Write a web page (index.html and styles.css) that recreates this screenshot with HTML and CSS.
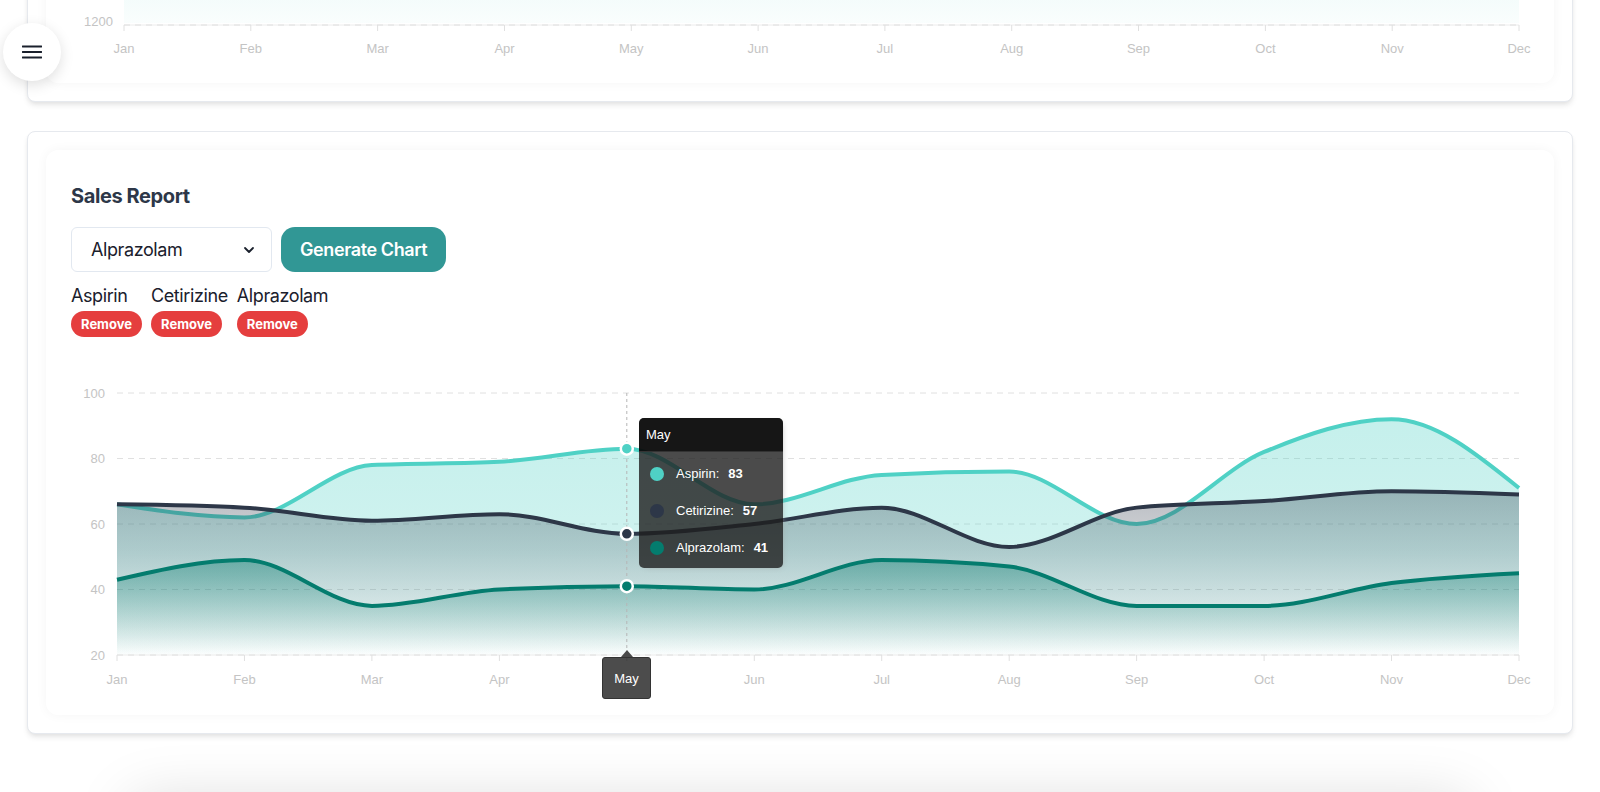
FILE: index.html
```html
<!DOCTYPE html>
<html lang="en">
<head>
<meta charset="utf-8">
<title>Sales Report</title>
<link rel="stylesheet" href="styles.css">
</head>
<body>
<button class="menu-btn" aria-label="Open menu">
  <svg width="20" height="14" viewBox="0 0 20 14"><path d="M0.5 1.5h19M0.5 7h19M0.5 12.5h19" stroke="#1a202c" stroke-width="1.9" stroke-linecap="round"/></svg>
</button>

<main class="page">
  <section class="card card-top">
    <div class="panel">
      <svg class="chart-top" width="1508" height="104" viewBox="0 0 1508 104">
        <defs>
          <linearGradient id="gTop" x1="0" y1="0" x2="0" y2="1">
            <stop offset="0" stop-color="#4fd1c5" stop-opacity="0.09"/>
            <stop offset="1" stop-color="#4fd1c5" stop-opacity="0.03"/>
          </linearGradient>
        </defs>
        <rect x="78" y="0" width="1395" height="44" fill="url(#gTop)"/>
        <line class="axis" x1="78" y1="46" x2="1473" y2="46"/>
        <line class="grid" x1="78" y1="46" x2="1473" y2="46"/>
        <g class="ticks">
          <line x1="78" y1="46" x2="78" y2="52"/><line x1="204.8" y1="46" x2="204.8" y2="52"/><line x1="331.6" y1="46" x2="331.6" y2="52"/><line x1="458.5" y1="46" x2="458.5" y2="52"/><line x1="585.3" y1="46" x2="585.3" y2="52"/><line x1="712.1" y1="46" x2="712.1" y2="52"/><line x1="838.9" y1="46" x2="838.9" y2="52"/><line x1="965.7" y1="46" x2="965.7" y2="52"/><line x1="1092.5" y1="46" x2="1092.5" y2="52"/><line x1="1219.4" y1="46" x2="1219.4" y2="52"/><line x1="1346.2" y1="46" x2="1346.2" y2="52"/><line x1="1473" y1="46" x2="1473" y2="52"/>
        </g>
        <text class="lbl" x="67" y="42" text-anchor="end" dy="0.35em">1200</text>
        <g class="lbl" text-anchor="middle">
          <text x="78" y="69" dy="0.35em">Jan</text><text x="204.8" y="69" dy="0.35em">Feb</text><text x="331.6" y="69" dy="0.35em">Mar</text><text x="458.5" y="69" dy="0.35em">Apr</text><text x="585.3" y="69" dy="0.35em">May</text><text x="712.1" y="69" dy="0.35em">Jun</text><text x="838.9" y="69" dy="0.35em">Jul</text><text x="965.7" y="69" dy="0.35em">Aug</text><text x="1092.5" y="69" dy="0.35em">Sep</text><text x="1219.4" y="69" dy="0.35em">Oct</text><text x="1346.2" y="69" dy="0.35em">Nov</text><text x="1473" y="69" dy="0.35em">Dec</text>
        </g>
      </svg>
    </div>
  </section>

  <section class="card">
    <div class="panel panel-main">
      <h2 class="title">Sales Report</h2>
      <div class="controls">
        <div class="select">
          <span>Alprazolam</span>
          <svg width="10" height="6" viewBox="0 0 10 6"><path d="M1 1l4 4 4-4" stroke="#1a202c" stroke-width="1.8" fill="none" stroke-linecap="round" stroke-linejoin="round"/></svg>
        </div>
        <button class="btn-primary">Generate Chart</button>
      </div>
      <ul class="tags">
        <li class="tag"><span class="tag-name">Aspirin</span><button class="btn-remove">Remove</button></li>
        <li class="tag"><span class="tag-name">Cetirizine</span><button class="btn-remove">Remove</button></li>
        <li class="tag"><span class="tag-name">Alprazolam</span><button class="btn-remove">Remove</button></li>
      </ul>

      <div class="chart-wrap">
        <svg class="chart" width="1458" height="355" viewBox="0 0 1458 355">
          <defs>
            <linearGradient id="gAsp" x1="0" y1="0" x2="0" y2="1">
              <stop offset="0" stop-color="#4fd1c5" stop-opacity="0.33"/>
              <stop offset="0.55" stop-color="#4fd1c5" stop-opacity="0.27"/>
              <stop offset="1" stop-color="#4fd1c5" stop-opacity="0.02"/>
            </linearGradient>
            <linearGradient id="gCet" x1="0" y1="0" x2="0" y2="1">
              <stop offset="0" stop-color="#2d3748" stop-opacity="0.33"/>
              <stop offset="1" stop-color="#2d3748" stop-opacity="0"/>
            </linearGradient>
            <linearGradient id="gAlp" x1="0" y1="0" x2="0" y2="1">
              <stop offset="0" stop-color="#047c6e" stop-opacity="0.42"/>
              <stop offset="1" stop-color="#047c6e" stop-opacity="0"/>
            </linearGradient>
          </defs>
          <g class="grid">
            <line x1="46" y1="43" x2="1448" y2="43"/>
            <line x1="46" y1="108.5" x2="1448" y2="108.5"/>
            <line x1="46" y1="174" x2="1448" y2="174"/>
            <line x1="46" y1="239.5" x2="1448" y2="239.5"/>
          </g>
          <g class="lbl" text-anchor="end">
            <text x="34" y="43" dy="0.35em">100</text>
            <text x="34" y="108.5" dy="0.35em">80</text>
            <text x="34" y="174" dy="0.35em">60</text>
            <text x="34" y="239.5" dy="0.35em">40</text>
            <text x="34" y="305" dy="0.35em">20</text>
          </g>

          <path id="area-asp" fill="url(#gAsp)"/>
          <path id="line-asp" class="line" stroke="#4fd1c5"/>
          <path id="area-cet" fill="url(#gCet)"/>
          <path id="line-cet" class="line" stroke="#2d3748"/>
          <path id="area-alp" fill="url(#gAlp)"/>
          <path id="line-alp" class="line" stroke="#047c6e"/>

          <line class="axis" x1="46" y1="305" x2="1448" y2="305"/>
          <line class="grid-b" x1="46" y1="305" x2="1448" y2="305"/>
          <g class="ticks">
            <line x1="46" y1="305" x2="46" y2="311"/><line x1="173.45" y1="305" x2="173.45" y2="311"/><line x1="300.9" y1="305" x2="300.9" y2="311"/><line x1="428.4" y1="305" x2="428.4" y2="311"/><line x1="555.8" y1="305" x2="555.8" y2="311"/><line x1="683.3" y1="305" x2="683.3" y2="311"/><line x1="810.7" y1="305" x2="810.7" y2="311"/><line x1="938.2" y1="305" x2="938.2" y2="311"/><line x1="1065.6" y1="305" x2="1065.6" y2="311"/><line x1="1193.1" y1="305" x2="1193.1" y2="311"/><line x1="1320.5" y1="305" x2="1320.5" y2="311"/><line x1="1448" y1="305" x2="1448" y2="311"/>
          </g>
          <g class="lbl" text-anchor="middle">
            <text x="46" y="329" dy="0.35em">Jan</text><text x="173.45" y="329" dy="0.35em">Feb</text><text x="300.9" y="329" dy="0.35em">Mar</text><text x="428.4" y="329" dy="0.35em">Apr</text><text x="683.3" y="329" dy="0.35em">Jun</text><text x="810.7" y="329" dy="0.35em">Jul</text><text x="938.2" y="329" dy="0.35em">Aug</text><text x="1065.6" y="329" dy="0.35em">Sep</text><text x="1193.1" y="329" dy="0.35em">Oct</text><text x="1320.5" y="329" dy="0.35em">Nov</text><text x="1448" y="329" dy="0.35em">Dec</text>
          </g>

          <line class="crosshair" x1="555.8" y1="43" x2="555.8" y2="305"/>
          <g class="markers">
            <circle cx="555.8" cy="98.7" r="6" fill="#4fd1c5"/>
            <circle cx="555.8" cy="183.8" r="6" fill="#2d3748"/>
            <circle cx="555.8" cy="236.2" r="6" fill="#047c6e"/>
          </g>
        </svg>

        <div class="tooltip">
          <div class="tt-title">May</div>
          <div class="tt-body">
            <div class="tt-row"><span class="dot dot-asp"></span><span class="tt-label">Aspirin:</span><span class="tt-val">83</span></div>
            <div class="tt-row"><span class="dot dot-cet"></span><span class="tt-label">Cetirizine:</span><span class="tt-val">57</span></div>
            <div class="tt-row"><span class="dot dot-alp"></span><span class="tt-label">Alprazolam:</span><span class="tt-val">41</span></div>
          </div>
        </div>
        <div class="xtip">May</div>
      </div>
    </div>
  </section>

  <section class="card card-next"></section>
</main>
<script src="script.js"></script>
</body>
</html>
```

FILE: styles.css
```css
* { box-sizing: border-box; }

html, body {
  margin: 0;
  background: #ffffff;
  overflow: hidden;
  height: 792px;
}

body {
  font-family: Inter, "Noto Sans", sans-serif;
  color: #1a202c;
}

.menu-btn {
  position: fixed;
  left: 3px;
  top: 23px;
  width: 58px;
  height: 58px;
  border: none;
  border-radius: 50%;
  background: #ffffff;
  box-shadow: 0 4px 14px rgba(0, 0, 0, 0.13);
  display: flex;
  align-items: center;
  justify-content: center;
  padding: 0;
  z-index: 10;
}

.menu-btn svg { display: block; }

.page {
  display: flex;
  flex-direction: column;
  gap: 29px;
  padding: 0 27px;
}

.card {
  background: #ffffff;
  border: 1px solid #e6e9ee;
  border-radius: 8px;
  padding: 18px;
  box-shadow: 0 4px 6px -1px rgba(0, 0, 0, 0.09), 0 2px 4px -1px rgba(0, 0, 0, 0.05);
}

.card-top { margin-top: -40px; }

.panel {
  background: #ffffff;
  border-radius: 12px;
  box-shadow: 0 0 12px rgba(0, 0, 0, 0.045);
}

.panel svg { display: block; overflow: visible; }

.panel-main { padding: 34px 25px 10px; }

.title {
  margin: 0 0 19px;
  font-size: 20px;
  line-height: 24px;
  font-weight: 700;
  letter-spacing: -0.4px;
  color: #2d3748;
}

.controls {
  display: flex;
  gap: 9px;
  height: 45px;
}

.select {
  width: 201px;
  height: 45px;
  border: 1px solid #e2e8f0;
  border-radius: 6px;
  padding: 0 17px 0 19px;
  display: flex;
  align-items: center;
  justify-content: space-between;
  font-size: 18px;
  letter-spacing: -0.4px;
  color: #1a202c;
}

.btn-primary {
  height: 45px;
  padding: 0 19px;
  border: none;
  border-radius: 14px;
  background: #319795;
  color: #ffffff;
  font-family: Inter, "Noto Sans", sans-serif;
  font-size: 18px;
  font-weight: 600;
  letter-spacing: -0.4px;
}

.tags {
  list-style: none;
  margin: 10px 0 0;
  padding: 0;
  display: flex;
  gap: 9px;
}

.tag {
  display: flex;
  flex-direction: column;
  align-items: flex-start;
}

.tag-name {
  font-size: 18px;
  line-height: 27px;
  letter-spacing: -0.4px;
  color: #1a202c;
}

.btn-remove {
  margin-top: 2px;
  height: 26px;
  padding: 0 10px;
  border: none;
  border-radius: 13px;
  background: #e53e3e;
  color: #ffffff;
  font-family: Inter, "Noto Sans", sans-serif;
  font-size: 13px;
  font-weight: 700;
}

.chart-wrap {
  position: relative;
  margin-top: 13px;
}

.lbl {
  font-family: "Liberation Sans", Arial, sans-serif;
  font-size: 13px;
  fill: #c4c4c4;
}

.grid line, line.grid, line.grid-b {
  stroke: #e0e0e0;
  stroke-width: 1;
  stroke-dasharray: 6 5;
}

.axis {
  stroke: #ececec;
  stroke-width: 1;
}

.ticks line {
  stroke: #e0e0e0;
  stroke-width: 1;
}

.line {
  fill: none;
  stroke-width: 4;
  stroke-linecap: butt;
  stroke-linejoin: round;
}

.crosshair {
  stroke: #b6b6b6;
  stroke-width: 1;
  stroke-dasharray: 3 3;
}

.markers circle {
  stroke: #ffffff;
  stroke-width: 2.5;
}

.tooltip {
  position: absolute;
  left: 568px;
  top: 68px;
  width: 144px;
  height: 150px;
  border-radius: 5px;
  background: rgba(30, 30, 30, 0.8);
  color: #ffffff;
  overflow: hidden;
  font-family: "Liberation Sans", Arial, sans-serif;
  font-size: 13px;
  box-shadow: 2px 2px 6px -4px #999;
}

.tt-title {
  height: 34px;
  line-height: 33px;
  padding: 0 7px;
  background: rgba(0, 0, 0, 0.7);
  border-bottom: 1px solid #333;
}

.tt-body { padding-top: 3px; }

.tt-row {
  height: 37px;
  display: flex;
  align-items: center;
  padding-left: 11px;
}

.dot {
  width: 14px;
  height: 14px;
  border-radius: 50%;
  margin-right: 12px;
}

.dot-asp { background: #4fd1c5; }
.dot-cet { background: #2d3748; }
.dot-alp { background: #047c6e; }

.tt-val {
  margin-left: 9px;
  font-weight: 700;
}

.xtip {
  position: absolute;
  left: 531px;
  top: 307px;
  width: 49px;
  height: 42px;
  border-radius: 3px;
  background: rgba(0, 0, 0, 0.7);
  border: 1px solid #333;
  color: #ffffff;
  font-family: "Liberation Sans", Arial, sans-serif;
  font-size: 13px;
  display: flex;
  align-items: center;
  justify-content: center;
}

.xtip::after {
  content: "";
  position: absolute;
  left: 50%;
  top: -8px;
  margin-left: -6px;
  border-left: 6px solid transparent;
  border-right: 6px solid transparent;
  border-bottom: 7px solid #4a4a4a;
}

.card-next {
  height: 200px;
  margin: 38px 105px 0;
  border: none;
  box-shadow: 0 0 60px rgba(0, 0, 0, 0.15);
}
```

FILE: script.js
```js
(function () {
  var X0 = 46, X1 = 1448, BASE = 305;
  var DX = (X1 - X0) / 11;
  function yOf(v) { return BASE - (v - 20) * 3.275; }

  var series = {
    asp: [66, 62, 78, 79, 83, 66, 75, 76, 60, 82, 92, 71],
    cet: [66, 65, 61, 63, 57, 60, 65, 53, 65, 67, 70, 69],
    alp: [43, 49, 35, 40, 41, 40, 49, 47, 35, 35, 42, 45]
  };

  function sign(x) { return x < 0 ? -1 : 1; }

  function monotone(vals) {
    var pts = vals.map(function (v, i) { return [X0 + i * DX, yOf(v)]; });
    var n = pts.length, s = [], m = [], i;
    for (i = 0; i < n - 1; i++) s[i] = (pts[i + 1][1] - pts[i][1]) / DX;
    for (i = 1; i < n - 1; i++) {
      var s0 = s[i - 1], s1 = s[i], p = (s0 + s1) / 2;
      m[i] = (sign(s0) + sign(s1)) * Math.min(Math.abs(s0), Math.abs(s1), 0.5 * Math.abs(p)) || 0;
    }
    m[0] = (3 * s[0] - m[1]) / 2;
    m[n - 1] = (3 * s[n - 2] - m[n - 2]) / 2;
    var h = DX / 3;
    var d = "M" + pts[0][0].toFixed(2) + "," + pts[0][1].toFixed(2);
    for (i = 0; i < n - 1; i++) {
      var a = pts[i], b = pts[i + 1];
      d += " C" + (a[0] + h).toFixed(2) + "," + (a[1] + h * m[i]).toFixed(2) +
        " " + (b[0] - h).toFixed(2) + "," + (b[1] - h * m[i + 1]).toFixed(2) +
        " " + b[0].toFixed(2) + "," + b[1].toFixed(2);
    }
    return d;
  }

  Object.keys(series).forEach(function (k) {
    var d = monotone(series[k]);
    document.getElementById("line-" + k).setAttribute("d", d);
    document.getElementById("area-" + k).setAttribute("d", d + " L" + X1 + "," + BASE + " L" + X0 + "," + BASE + " Z");
  });
})();
```
